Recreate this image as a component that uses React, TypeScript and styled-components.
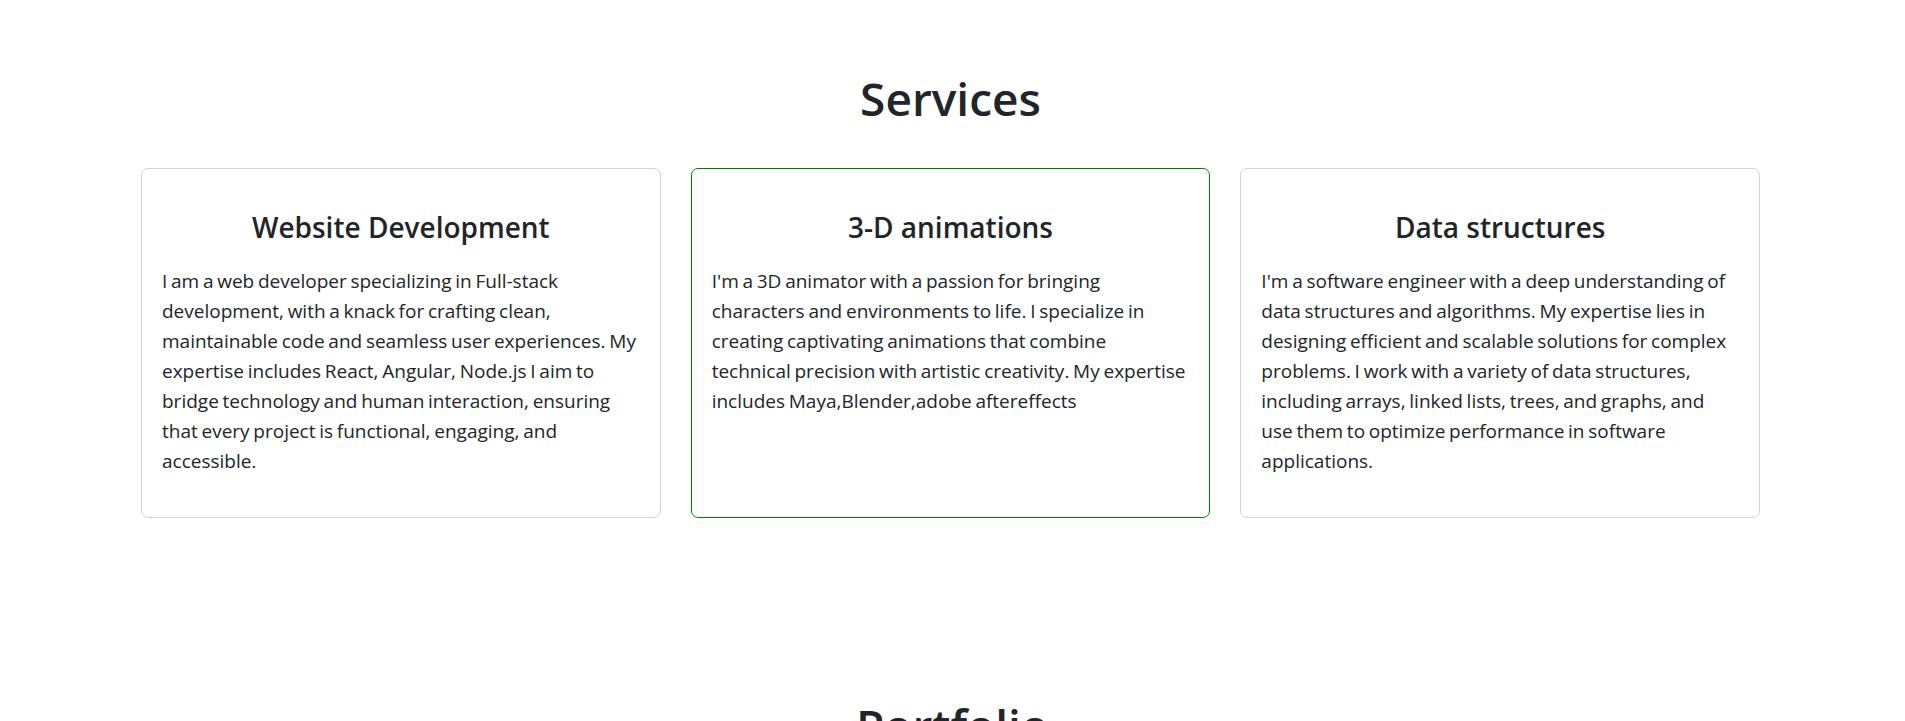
import React from "react";
import styled, { createGlobalStyle } from "styled-components";

const GlobalStyle = createGlobalStyle`
  html, body {
    margin: 0;
    padding: 0;
    background: #ffffff;
  }
  body {
    font-family: "Open Sans", "Noto Sans", sans-serif;
    color: #212529;
  }
  * { box-sizing: border-box; }
`;

const Section = styled.section`
  padding: 71px 145px 0 141px;
`;

const SectionTitle = styled.h1`
  margin: 0 0 42px;
  text-align: center;
  font-size: 46px;
  line-height: 1.2;
  font-weight: 600;
  color: #212529;
`;

const CardGrid = styled.div`
  display: grid;
  grid-template-columns: repeat(3, 1fr);
  gap: 30px;
`;

const Card = styled.article<{ $active?: boolean }>`
  border: 1px solid ${(p) => (p.$active ? "#008000" : "#d3d3d3")};
  border-radius: 7px;
  background: #fff;
  padding: 42px 22px 41px 20px;
`;

const CardTitle = styled.h3`
  margin: 0 -2px 21px 0;
  text-align: center;
  font-size: 28px;
  line-height: 1.2;
  font-weight: 600;
  color: #212529;
`;

const CardText = styled.p`
  margin: 0;
  font-size: 19px;
  line-height: 30px;
  word-spacing: -1.2px;
  color: #212529;
`;

const NextSection = styled.section`
  padding: 180px 0 0;
`;

const services = [
  {
    title: "Website Development",
    text: "I am a web developer specializing in Full-stack development, with a knack for crafting clean, maintainable code and seamless user experiences. My expertise includes React, Angular, Node.js I aim to bridge technology and human interaction, ensuring that every project is functional, engaging, and accessible.",
  },
  {
    title: "3-D animations",
    text: "I'm a 3D animator with a passion for bringing characters and environments to life. I specialize in creating captivating animations that combine technical precision with artistic creativity. My expertise includes Maya,Blender,adobe aftereffects",
    active: true,
  },
  {
    title: "Data structures",
    text: "I'm a software engineer with a deep understanding of data structures and algorithms. My expertise lies in designing efficient and scalable solutions for complex problems. I work with a variety of data structures, including arrays, linked lists, trees, and graphs, and use them to optimize performance in software applications.",
  },
];

export default function App() {
  return (
    <>
      <GlobalStyle />
      <Section>
        <SectionTitle>Services</SectionTitle>
        <CardGrid>
          {services.map((s) => (
            <Card key={s.title} $active={s.active}>
              <CardTitle>{s.title}</CardTitle>
              <CardText>{s.text}</CardText>
            </Card>
          ))}
        </CardGrid>
      </Section>
      <NextSection>
        <SectionTitle>Portfolio</SectionTitle>
      </NextSection>
    </>
  );
}
